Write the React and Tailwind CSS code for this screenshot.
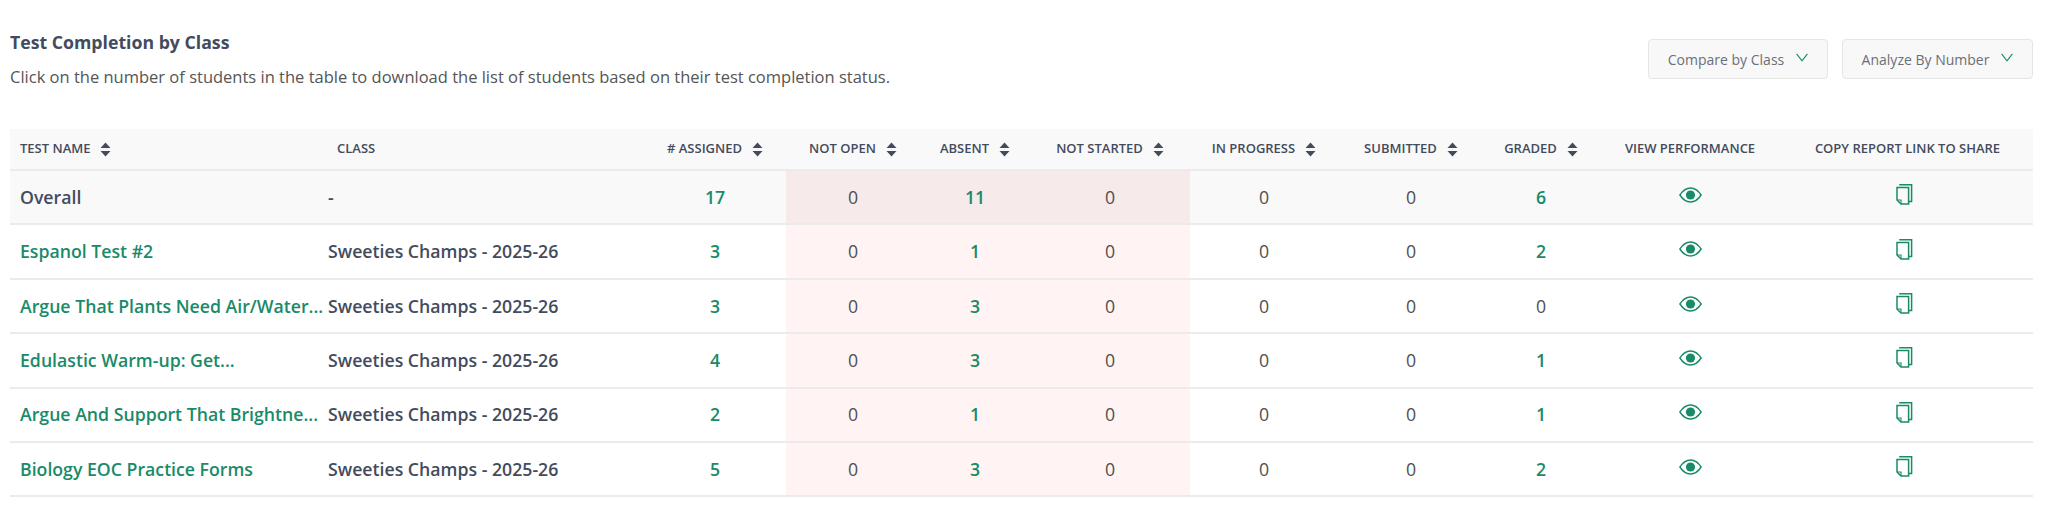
import React from "react";

const rows = [
  { name: "Overall", cls: "-", assigned: 17, notOpen: 0, absent: 11, notStarted: 0, inProgress: 0, submitted: 0, graded: 6, overall: true },
  { name: "Espanol Test #2", cls: "Sweeties Champs - 2025-26", assigned: 3, notOpen: 0, absent: 1, notStarted: 0, inProgress: 0, submitted: 0, graded: 2 },
  { name: "Argue That Plants Need Air/Water...", cls: "Sweeties Champs - 2025-26", assigned: 3, notOpen: 0, absent: 3, notStarted: 0, inProgress: 0, submitted: 0, graded: 0 },
  { name: "Edulastic Warm-up: Get...", cls: "Sweeties Champs - 2025-26", assigned: 4, notOpen: 0, absent: 3, notStarted: 0, inProgress: 0, submitted: 0, graded: 1 },
  { name: "Argue And Support That Brightne...", cls: "Sweeties Champs - 2025-26", assigned: 2, notOpen: 0, absent: 1, notStarted: 0, inProgress: 0, submitted: 0, graded: 1 },
  { name: "Biology EOC Practice Forms", cls: "Sweeties Champs - 2025-26", assigned: 5, notOpen: 0, absent: 3, notStarted: 0, inProgress: 0, submitted: 0, graded: 2 },
];

function SortIcon() {
  return (
    <svg width="11" height="15" viewBox="0 0 11 15" className="ml-[10px] shrink-0">
      <path d="M5.5 0.5 L10.5 6 H0.5 Z M0.5 9 H10.5 L5.5 14.5 Z" fill="#434b5d" />
    </svg>
  );
}

function Chevron() {
  return (
    <svg width="12" height="9" viewBox="0 0 12 9" className="-mt-[4px] shrink-0">
      <path d="M0.6 0.8 L6 7.8 L11.4 0.8" fill="none" stroke="#1a8a69" strokeWidth="1.1" />
    </svg>
  );
}

function EyeIcon() {
  return (
    <svg width="23" height="16" viewBox="0 0 23 16" className="inline-block">
      <path d="M0.9 8 C4 3.2 7.5 1 11.5 1 C15.5 1 19 3.2 22.1 8 C19 12.8 15.5 15 11.5 15 C7.5 15 4 12.8 0.9 8 Z" fill="none" stroke="#1a8a69" strokeWidth="1.4" />
      <circle cx="11.5" cy="8" r="4.6" fill="#1a8a69" />
    </svg>
  );
}

function CopyIcon() {
  return (
    <svg width="17" height="21" viewBox="0 0 17 21" className="inline-block">
      <path d="M1 3.6 H12.6 V20 H5 L1 16 Z" fill="none" stroke="#1a8a69" strokeWidth="1.5" />
      <path d="M1 16 H5 V20" fill="none" stroke="#1a8a69" strokeWidth="1.1" />
      <path d="M3.2 0.8 H15.6 V17.5 H12.6" fill="none" stroke="#1a8a69" strokeWidth="1.5" />
    </svg>
  );
}

function Th({ label, sort, className = "" }) {
  return (
    <th className={`h-[41px] border-b-2 border-[#ebebeb] p-0 text-[13px] font-semibold uppercase text-[#434b5d] ${className}`}>
      <span className={`flex items-center ${className.includes("text-left") ? "justify-start" : "justify-center"}`}>
        {label}
        {sort && <SortIcon />}
      </span>
    </th>
  );
}

function Count({ value, link, pink, overall }) {
  let bg = "";
  if (pink) bg = overall ? "bg-[#f6eaea]" : "bg-[#fff4f3]";
  return (
    <td className={`border-b-2 border-[#ebebeb] p-0 text-center text-[17.7px] ${link ? "font-semibold text-[#1a8a69]" : "font-medium text-[#4f4f4f]"} ${bg}`}>
      {value}
    </td>
  );
}

export default function App() {
  return (
    <div className="w-full bg-white pl-[10px] pr-[15px] pt-[30px] font-['Open_Sans',sans-serif]">
      <div className="flex items-start justify-between">
        <div>
          <h2 className="text-[17.7px] font-bold leading-[24px] text-[#434b5d]">Test Completion by Class</h2>
          <p className="mt-[12px] text-[16.5px] leading-[22px] text-[#555]">
            Click on the number of students in the table to download the list of students based on their test completion status.
          </p>
        </div>
        <div className="mt-[9px] flex gap-[14px]">
          <button className="flex h-[40px] w-[180px] items-center justify-center gap-[12px] rounded border border-[#e5e5e5] bg-[#f8f8f8] text-[14px] text-[#6a6f78]">
            Compare by Class
            <Chevron />
          </button>
          <button className="flex h-[40px] w-[191px] items-center justify-center gap-[12px] rounded border border-[#e5e5e5] bg-[#f8f8f8] text-[14px] text-[#6a6f78]">
            Analyze By Number
            <Chevron />
          </button>
        </div>
      </div>

      <table className="mt-[41px] w-[2023px] table-fixed">
        <colgroup>
          <col className="w-[318px]" />
          <col className="w-[316px]" />
          <col className="w-[142px]" />
          <col className="w-[134px]" />
          <col className="w-[110px]" />
          <col className="w-[160px]" />
          <col className="w-[148px]" />
          <col className="w-[146px]" />
          <col className="w-[114px]" />
          <col className="w-[184px]" />
          <col className="w-[251px]" />
        </colgroup>
        <thead className="bg-[#f9f9f9]">
          <tr>
            <Th label="Test Name" sort className="pl-[10px] text-left" />
            <Th label="Class" className="pl-[9px] text-left" />
            <Th label="# Assigned" sort />
            <Th label="Not Open" sort />
            <Th label="Absent" sort />
            <Th label="Not Started" sort />
            <Th label="In Progress" sort />
            <Th label="Submitted" sort />
            <Th label="Graded" sort />
            <Th label="View Performance" />
            <Th label="Copy Report Link to Share" />
          </tr>
        </thead>
        <tbody>
          {rows.map((row) => (
            <tr key={row.name} className={`h-[54.4px] ${row.overall ? "bg-[#f9f9f9]" : ""}`}>
              <td className={`overflow-hidden whitespace-nowrap border-b-2 border-[#ebebeb] p-0 pl-[10px] text-[17.7px] font-semibold ${row.overall ? "text-[#434b5d]" : "text-[#1a8a69]"}`}>
                {row.name}
              </td>
              <td className="border-b-2 border-[#ebebeb] p-0 text-[17.7px] font-semibold text-[#434b5d]">{row.cls}</td>
              <Count value={row.assigned} link />
              <Count value={row.notOpen} pink overall={row.overall} />
              <Count value={row.absent} link pink overall={row.overall} />
              <Count value={row.notStarted} pink overall={row.overall} />
              <Count value={row.inProgress} />
              <Count value={row.submitted} />
              <Count value={row.graded} link={row.graded > 0} />
              <td className="border-b-2 border-[#ebebeb] p-0 pb-[8px] text-center"><EyeIcon /></td>
              <td className="border-b-2 border-[#ebebeb] p-0 pb-[8px] pr-[7px] text-center"><CopyIcon /></td>
            </tr>
          ))}
        </tbody>
      </table>
    </div>
  );
}
